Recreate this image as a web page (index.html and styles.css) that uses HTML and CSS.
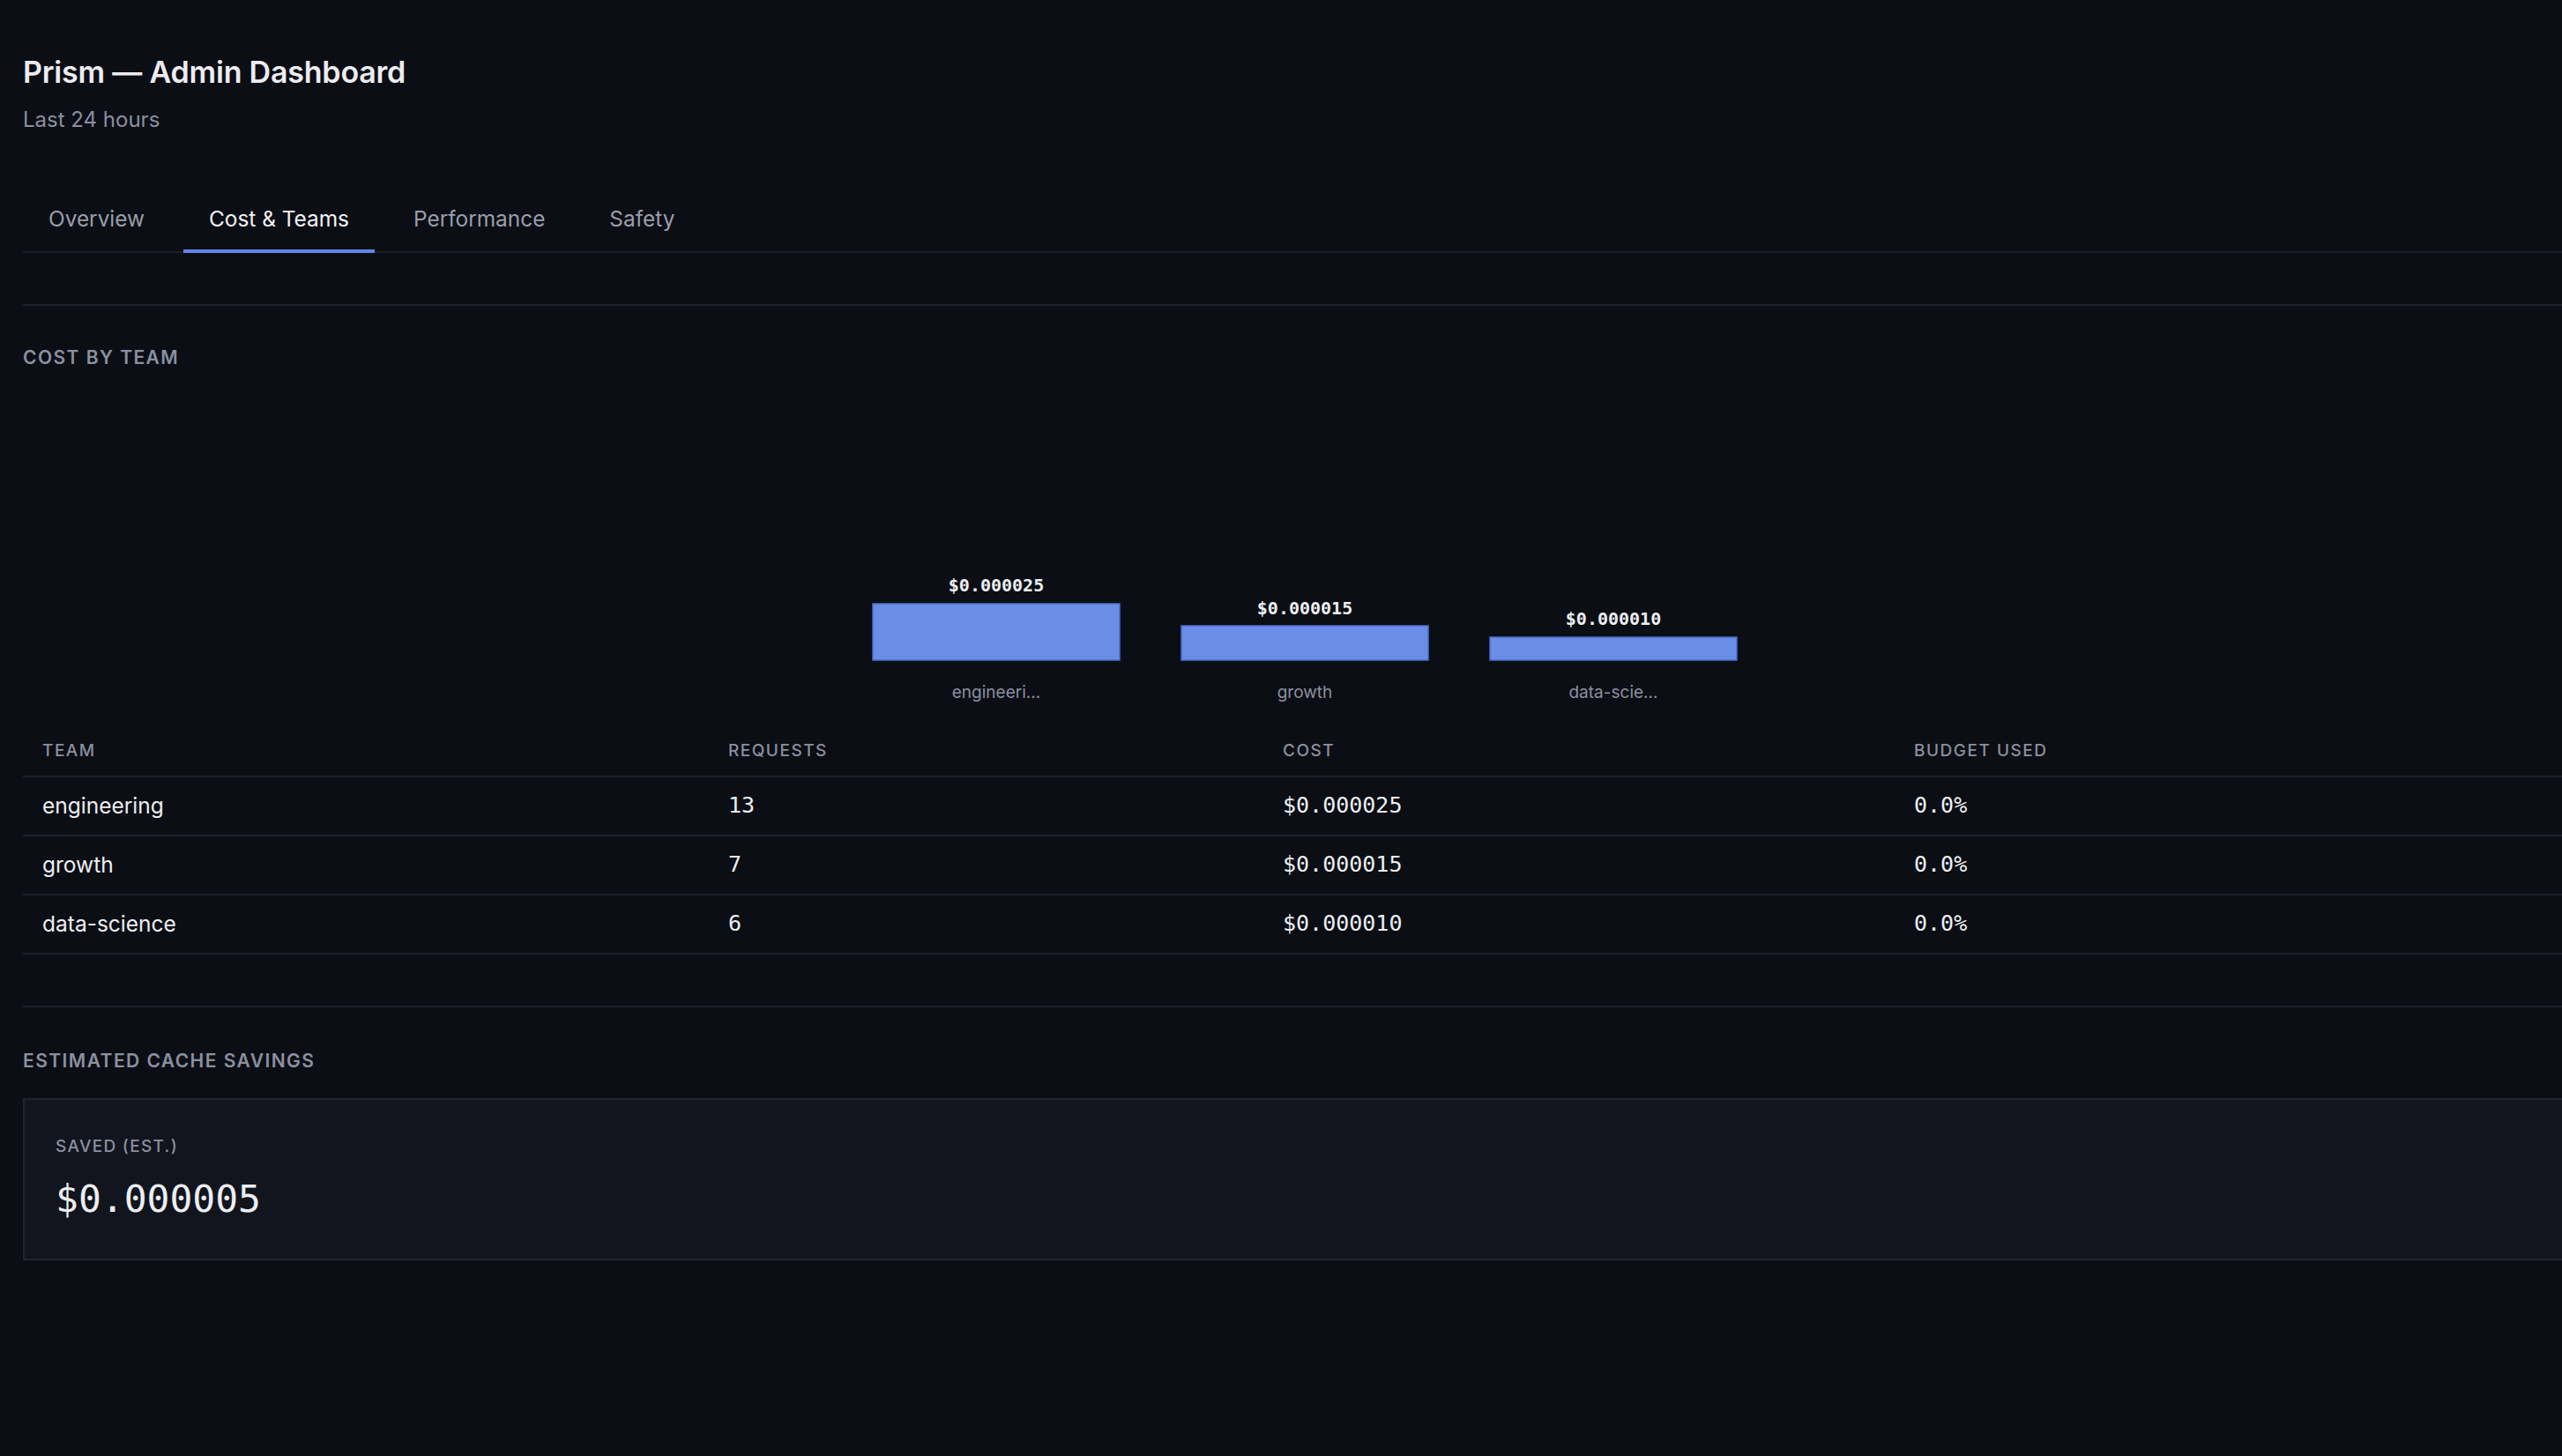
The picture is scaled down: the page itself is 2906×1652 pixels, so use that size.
FILE: index.html
```html
<!DOCTYPE html>
<html lang="en">
<head>
  <meta charset="UTF-8">
  <title>Prism — Admin Dashboard</title>
  <link rel="stylesheet" href="styles.css">
</head>
<body>

  <div class="page">
    <header class="page-header">
      <h1>Prism — Admin Dashboard</h1>
      <div class="subtitle">Last 24 hours</div>
    </header>

    <nav class="tabs">
      <button class="tab">Overview</button>
      <button class="tab active">Cost &amp; Teams</button>
      <button class="tab">Performance</button>
      <button class="tab">Safety</button>
    </nav>

    <section class="section first">
      <h2 class="section-title">Cost by team</h2>

      <svg class="chart" viewBox="0 0 2908 390" width="2908" height="390">
        <g class="bar">
          <text class="bar-value" x="1104" y="240">$0.000025</text>
          <rect x="964" y="254" width="280" height="64"></rect>
          <text class="bar-label" x="1104" y="361">engineeri…</text>
        </g>
        <g class="bar">
          <text class="bar-value" x="1454" y="266">$0.000015</text>
          <rect x="1314" y="279" width="280" height="39"></rect>
          <text class="bar-label" x="1454" y="361">growth</text>
        </g>
        <g class="bar">
          <text class="bar-value" x="1804" y="278">$0.000010</text>
          <rect x="1664" y="292" width="280" height="26"></rect>
          <text class="bar-label" x="1804" y="361">data-scie…</text>
        </g>
      </svg>

      <table class="team-table">
        <colgroup>
          <col class="col-team">
          <col class="col-requests">
          <col class="col-cost">
          <col class="col-budget">
        </colgroup>
        <thead>
          <tr>
            <th>Team</th>
            <th>Requests</th>
            <th>Cost</th>
            <th>Budget used</th>
          </tr>
        </thead>
        <tbody>
          <tr>
            <td>engineering</td>
            <td class="mono">13</td>
            <td class="mono">$0.000025</td>
            <td class="mono">0.0%</td>
          </tr>
          <tr>
            <td>growth</td>
            <td class="mono">7</td>
            <td class="mono">$0.000015</td>
            <td class="mono">0.0%</td>
          </tr>
          <tr>
            <td>data-science</td>
            <td class="mono">6</td>
            <td class="mono">$0.000010</td>
            <td class="mono">0.0%</td>
          </tr>
        </tbody>
      </table>
    </section>

    <section class="section">
      <h2 class="section-title">Estimated cache savings</h2>

      <div class="stat-card">
        <div class="stat-label">Saved (est.)</div>
        <div class="stat-value">$0.000005</div>
      </div>
    </section>
  </div>

</body>
</html>
```

FILE: styles.css
```css
html, body {
  margin: 0;
  padding: 0;
  background-color: #0b0e14;
  color: #e9eaef;
  font-family: Inter, 'Noto Sans', sans-serif;
  overflow-x: hidden;
}

.page {
  width: 2908px;
  padding: 62px 0 80px 26px;
}

h1 {
  margin: 0;
  font-size: 34px;
  line-height: 1.2;
  font-weight: 600;
  color: #ececf1;
  letter-spacing: -0.2px;
}

.subtitle {
  margin-top: 19px;
  font-size: 24px;
  line-height: 1.2;
  color: #8b90a0;
}

.tabs {
  display: flex;
  gap: 15px;
  margin-top: 62px;
  border-bottom: 2px solid #1b1e27;
}

.tab {
  background: none;
  border: none;
  border-bottom: 4px solid transparent;
  margin-bottom: -2px;
  padding: 20px 29px 20px 29px;
  font-family: Inter, 'Noto Sans', sans-serif;
  font-size: 24.4px;
  line-height: 30px;
  color: #9a9eac;
  cursor: pointer;
}

.tab.active {
  color: #f2f3f6;
  border-bottom-color: #5f86e8;
}

.section {
  border-top: 2px solid #1d2029;
  padding-top: 48px;
  margin-top: 58px;
}

.section.first {
  padding-top: 46px;
}

.section-title {
  margin: 0;
  font-size: 21px;
  line-height: 1.2;
  font-weight: 600;
  letter-spacing: 1.45px;
  text-transform: uppercase;
  color: #8b90a0;
}

.chart {
  display: block;
  margin-top: 13px;
}

.bar rect {
  fill: #6a8de8;
  stroke: #4d6fcc;
  stroke-width: 1.5;
}

.bar-value {
  font-family: 'DejaVu Sans Mono', monospace;
  font-size: 20px;
  font-weight: bold;
  fill: #eceef2;
  text-anchor: middle;
}

.bar-label {
  font-family: Inter, 'Noto Sans', sans-serif;
  font-size: 19px;
  fill: #8b90a0;
  text-anchor: middle;
}

.team-table {
  width: 2908px;
  border-collapse: collapse;
  table-layout: fixed;
}

.col-team { width: 778px; }
.col-requests { width: 629px; }
.col-cost { width: 716px; }
.col-budget { width: 785px; }

.team-table th {
  text-align: left;
  padding: 19px 22px 17px 22px;
  font-size: 19px;
  line-height: 23px;
  font-weight: 500;
  letter-spacing: 1.5px;
  text-transform: uppercase;
  color: #8b90a0;
  border-bottom: 2px solid #1d2029;
}

.team-table td {
  padding: 18px 22px 19px 22px;
  font-size: 24.5px;
  line-height: 28px;
  color: #eceef2;
  border-bottom: 2px solid #1d2029;
}

.team-table td.mono {
  font-family: 'DejaVu Sans Mono', monospace;
  font-size: 25px;
}

.stat-card {
  margin-top: 30px;
  background-color: #12151d;
  border: 2px solid #22252f;
  padding: 41px 35px 42px 35px;
}

.stat-label {
  font-size: 19px;
  line-height: 23px;
  font-weight: 500;
  letter-spacing: 1.3px;
  text-transform: uppercase;
  color: #8b90a0;
}

.stat-value {
  margin-top: 22px;
  font-family: 'DejaVu Sans Mono', monospace;
  font-size: 43px;
  line-height: 52px;
  color: #eceef2;
}
```
